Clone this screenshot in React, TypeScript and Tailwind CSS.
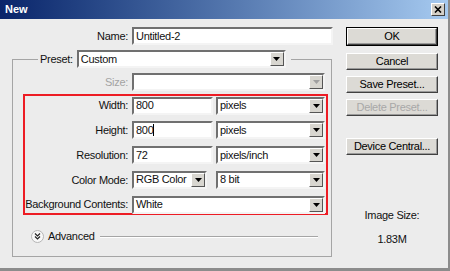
import type { ReactNode } from "react";

const sunken =
  "border-2 border-t-[#707070] border-l-[#707070] border-b-[#f4f4f4] border-r-[#f4f4f4] bg-white";

function Arrow({ disabled }: { disabled?: boolean }) {
  return (
    <div className="h-full w-[14px] flex items-center justify-center bg-[#d8d6d0] border border-t-white border-l-white border-b-[#555] border-r-[#555]">
      <svg width="7" height="4" viewBox="0 0 7 4">
        <path d="M0 0h7L3.5 4z" fill={disabled ? "#a0a0a0" : "#000"} />
      </svg>
    </div>
  );
}

function Select({ value, w, disabled }: { value: string; w: string; disabled?: boolean }) {
  return (
    <div className={`${sunken} ${w} h-[18px] flex items-center ${disabled ? "bg-[#ececec]" : ""}`}>
      <span className="flex-1 pl-[2px] leading-none whitespace-nowrap">{value}</span>
      <Arrow disabled={disabled} />
    </div>
  );
}

function Input({ value, w, caret }: { value: string; w: string; caret?: boolean }) {
  return (
    <div className={`${sunken} ${w} h-[18px] flex items-center pl-[2px]`}>
      <span className="leading-none">{value}</span>
      {caret && <span className="w-px h-[12px] bg-black" />}
    </div>
  );
}

function Row({ label, children }: { label: string; children: ReactNode }) {
  return (
    <div className="flex items-center h-[17px]">
      <span className="w-[103px] text-right mr-[4px] whitespace-nowrap">{label}</span>
      {children}
    </div>
  );
}

function Button({ label, def, disabled, mt }: { label: string; def?: boolean; disabled?: boolean; mt: string }) {
  return (
    <div className={`${mt} ${def ? "border border-black" : ""}`}>
      <div
        className={`h-[17px] flex items-center justify-center bg-[#dcdad5] border border-t-white border-l-white border-b-[#404040] border-r-[#404040] shadow-[inset_-1px_-1px_0_#9a9a9a] ${
          disabled ? "text-[#a8a8a8]" : "text-black"
        }`}
      >
        {label}
      </div>
    </div>
  );
}

export default function App() {
  return (
    <div className="w-[450px] h-[271px] bg-[#ececec] border-r-2 border-b-[3px] border-[#8c8c8c] flex flex-col text-[11px] tracking-[-0.3px] text-[#111] font-['Liberation_Sans',Arial,sans-serif] overflow-hidden">
      <div className="h-[19px] shrink-0 flex items-center justify-between pl-[5px] pr-[3px] bg-gradient-to-r from-[#0a246a] to-[#a6caf0]">
        <span className="text-white font-bold tracking-normal">New</span>
        <div className="w-[14px] h-[13px] flex items-center justify-center bg-[#d4d0c8] border border-t-white border-l-white border-b-[#404040] border-r-[#404040]">
          <svg width="8" height="7" viewBox="0 0 8 7">
            <path d="M1 0.5l6 6M7 0.5l-6 6" stroke="#000" strokeWidth="1.6" />
          </svg>
        </div>
      </div>

      <div className="flex flex-1">
        <div className="w-[335px]">
          <div className="mt-[8px] flex items-center">
            <span className="w-[128px] text-right mr-[4px]">Name:</span>
            <Input value="Untitled-2" w="w-[201px]" />
          </div>

          <fieldset className="ml-[12px] mt-[5px] w-[320px] border border-[#a5a5a5] pl-[10px] pb-[13px]">
            <legend className="ml-[15px] pl-[2px] pr-[5px]">
              <div className="flex items-center">
                <span className="mr-[4px]">Preset:</span>
                <Select value="Custom" w="w-[209px]" />
              </div>
            </legend>

            <div className="mt-[5px] flex items-center">
              <span className="w-[105px] text-right mr-[4px] text-[#a3a3a3]">Size:</span>
              <Select value="" w="w-[193px]" disabled />
            </div>

            <div className="mt-[3px] w-[305px] border-2 border-[#ed1c24] pt-[1px] flex flex-col gap-[7.75px]">
              <Row label="Width:">
                <Input value="800" w="w-[81px]" />
                <div className="ml-[3px]">
                  <Select value="pixels" w="w-[109px]" />
                </div>
              </Row>
              <Row label="Height:">
                <Input value="800" w="w-[81px]" caret />
                <div className="ml-[3px]">
                  <Select value="pixels" w="w-[109px]" />
                </div>
              </Row>
              <Row label="Resolution:">
                <Input value="72" w="w-[81px]" />
                <div className="ml-[3px]">
                  <Select value="pixels/inch" w="w-[109px]" />
                </div>
              </Row>
              <Row label="Color Mode:">
                <Select value="RGB Color" w="w-[75px]" />
                <div className="ml-[9px]">
                  <Select value="8 bit" w="w-[109px]" />
                </div>
              </Row>
              <Row label="Background Contents:">
                <Select value="White" w="w-[193px]" />
              </Row>
            </div>

            <div className="mt-[15px] h-[13px] flex items-center ml-[8px] mr-[13px]">
              <div className="w-[13px] h-[13px] rounded-full bg-[#f8f8f8] border border-[#b5b5b5] flex items-center justify-center">
                <svg width="7" height="7" viewBox="0 0 7 7">
                  <path d="M1 0.5l2.5 2.5L6 0.5M1 3.5l2.5 2.5L6 3.5" stroke="#222" strokeWidth="1.2" fill="none" />
                </svg>
              </div>
              <span className="ml-[4px]">Advanced</span>
              <div className="ml-[5px] flex-1 h-[2px] border-t border-t-[#a5a5a5] border-b border-b-white" />
            </div>
          </fieldset>
        </div>

        <div className="ml-[11px] w-[92px] flex flex-col">
          <Button label="OK" def mt="mt-[8px]" />
          <Button label="Cancel" mt="mt-[7px]" />
          <Button label="Save Preset..." mt="mt-[6px]" />
          <Button label="Delete Preset..." disabled mt="mt-[6px]" />
          <Button label="Device Central..." mt="mt-[22px]" />
          <div className="mt-[52px] text-center">Image Size:</div>
          <div className="mt-[7px] text-center">1.83M</div>
        </div>
      </div>
    </div>
  );
}
